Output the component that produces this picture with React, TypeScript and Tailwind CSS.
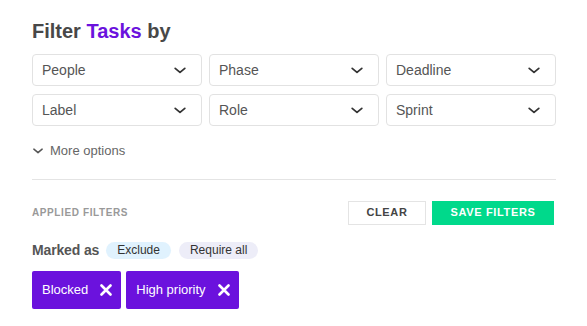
import { useState } from "react";

const filterFields = ["People", "Phase", "Deadline", "Label", "Role", "Sprint"];

function Chevron({ className }: { className?: string }) {
	return (
		<svg className={className} viewBox="0 0 14 8" fill="none">
			<path
				d="M1.5 1.5L7 6.2l5.5-4.7"
				stroke="currentColor"
				strokeWidth="2"
				strokeLinecap="round"
				strokeLinejoin="round"
			/>
		</svg>
	);
}

function CloseIcon() {
	return (
		<svg className="h-[12px] w-[12px]" viewBox="0 0 12 12" fill="none">
			<path
				d="M1.5 1.5l9 9M10.5 1.5l-9 9"
				stroke="currentColor"
				strokeWidth="2.6"
				strokeLinecap="round"
			/>
		</svg>
	);
}

export default function App() {
	const [tags, setTags] = useState(["Blocked", "High priority"]);

	return (
		<div
			className="min-h-[326px] w-[587px] bg-white px-8 pt-[19px]"
			style={{ fontFamily: '"Liberation Sans", Arial, sans-serif' }}
		>
			<h1 className="text-[20px] font-bold leading-6 text-[#484848]">
				Filter <span className="text-[#6b12dd]">Tasks</span> by
			</h1>

			<div className="mt-[11px] grid w-[524px] grid-cols-3 gap-x-[7px] gap-y-[8px]">
				{filterFields.map((field) => (
					<button
						key={field}
						type="button"
						className="flex h-[32px] items-center justify-between rounded-[4px] border border-[#e2e2e2] bg-white pl-[9px] pr-[14px] text-[14px] text-[#555]"
					>
						<span>{field}</span>
						<Chevron className="h-[7px] w-[14px] text-[#333]" />
					</button>
				))}
			</div>

			<button
				type="button"
				className="mt-[15px] flex items-center gap-[6px] text-[13px] text-[#666]"
			>
				<Chevron className="h-[6px] w-[12px] text-[#555]" />
				More options
			</button>

			<div className="mt-[18px] h-px w-[524px] bg-[#e4e4e4]" />

			<div className="mt-[21px] flex w-[524px] items-center justify-between">
				<span className="text-[10px] font-bold tracking-[0.06em] text-[#999]">
					APPLIED FILTERS
				</span>
				<div className="flex gap-[6px] pr-[2px]">
					<button
						type="button"
						className="h-[24px] w-[78px] border border-[#e4e4e4] bg-white text-[11px] font-bold tracking-[0.06em] text-[#444]"
					>
						CLEAR
					</button>
					<button
						type="button"
						className="h-[24px] w-[122px] bg-[#00d98b] text-[11px] font-bold tracking-[0.06em] text-white"
					>
						SAVE FILTERS
					</button>
				</div>
			</div>

			<div className="mt-[15px] flex items-center gap-[8px]">
				<span className="mr-[-1px] text-[14px] font-bold tracking-[-0.01em] text-[#555]">
					Marked as
				</span>
				<span className="flex h-[17px] items-center rounded-full bg-[#e0f2fe] px-[11px] text-[12px] text-[#333]">
					Exclude
				</span>
				<span className="flex h-[17px] items-center rounded-full bg-[#ededf8] px-[11px] text-[12px] text-[#333]">
					Require all
				</span>
			</div>

			<div className="mt-[10px] flex gap-[5px]">
				{tags.map((tag) => (
					<div
						key={tag}
						className="flex h-[38px] items-center gap-[12px] rounded-[2px] bg-[#6b12dd] pl-[10px] pr-[9px] text-[13px] text-white"
					>
						<span>{tag}</span>
						<button
							type="button"
							onClick={() => setTags((current) => current.filter((t) => t !== tag))}
						>
							<CloseIcon />
						</button>
					</div>
				))}
			</div>
		</div>
	);
}
